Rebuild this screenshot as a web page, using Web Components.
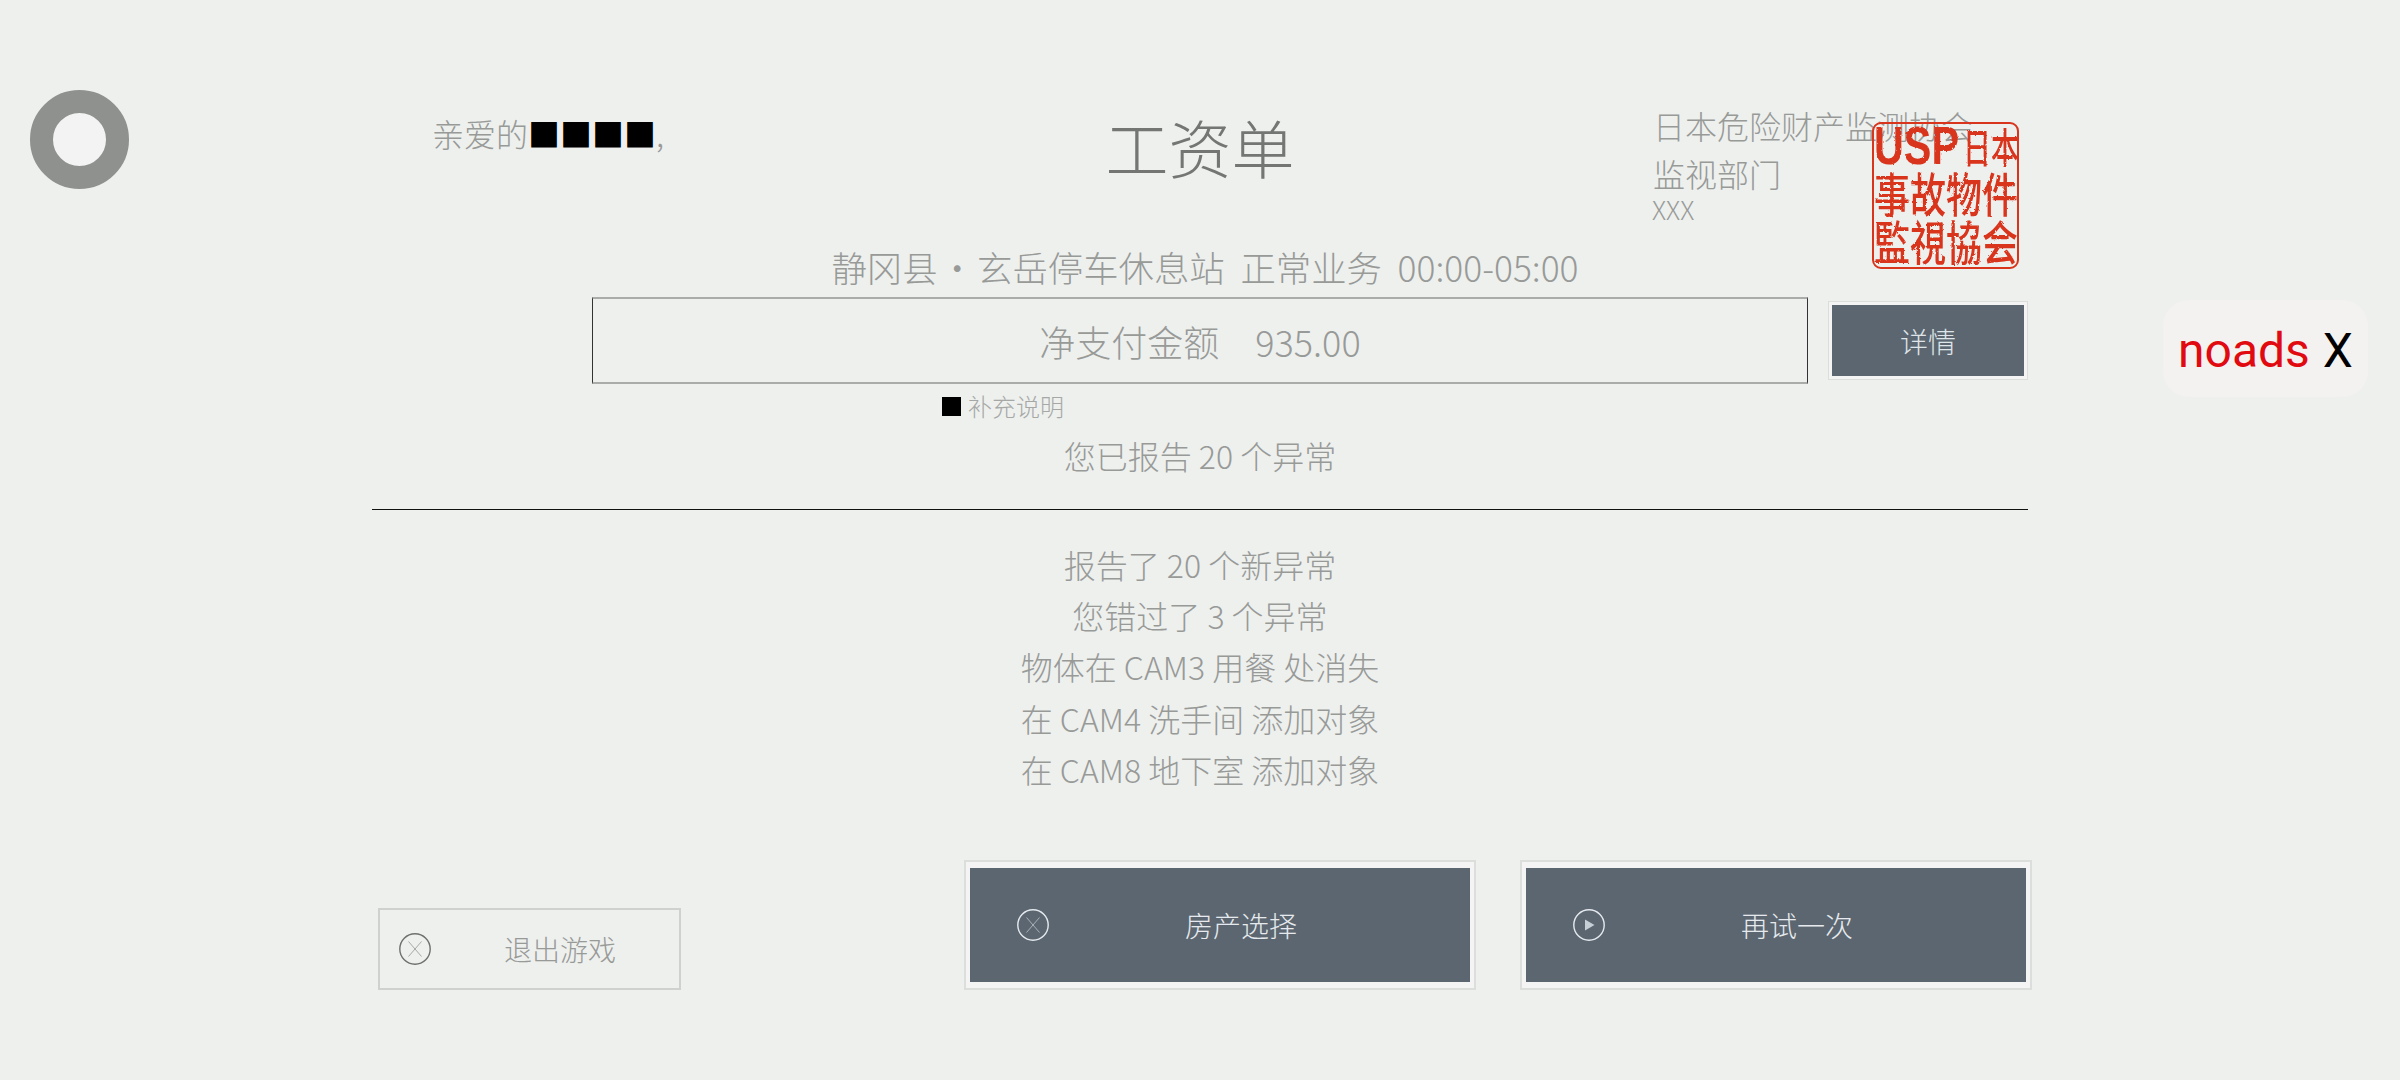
<!DOCTYPE html>
<html lang="zh">
<head>
<meta charset="utf-8">
<title>工资单</title>
<style>
  html, body { margin: 0; height: 100%; background: #eef0ee; }
  body { font-family: "Noto Sans CJK SC", "Noto Sans", sans-serif; font-weight: 300; color: #989a98; overflow: hidden; }
  b { color: #000; font-weight: 400; }
</style>
</head>
<body>
<pay-slip>
  <slip-header slot="header">
    <span slot="greeting">亲爱的<b>■■■■</b>,</span>
    <span slot="title">工资单</span>
    <span slot="org">日本危险财产监测协会</span>
    <span slot="dept">监视部门</span>
    <span slot="name">XXX</span>
  </slip-header>
  <slip-amount slot="amount"></slip-amount>
  <slip-button slot="actions" kind="exit" icon="cross">退出游戏</slip-button>
  <slip-button slot="actions" kind="main" icon="cross">房产选择</slip-button>
  <slip-button slot="actions" kind="main" icon="play">再试一次</slip-button>
</pay-slip>
<script>
'use strict'

const icons = {
  cross: '<circle cx="16" cy="16" r="15.2"/><path class="mark" d="M9.5 8.5 22.5 23.5M22.5 8.5 9.5 23.5"/>',
  play: '<circle cx="16" cy="16" r="15.2"/><path class="solid" d="M12 10.500 21.500 16 12 21.500Z"/>'
};

class RingIndicator extends HTMLElement {
  constructor() {
    super();
    this.attachShadow({ mode: 'open' }).innerHTML = `
<style>
  :host { display: block; position: absolute; left: 30px; top: 90px; width: 99px; height: 99px; box-sizing: border-box; border: 23px solid #8f918e; border-radius: 50%; background: #f2f3f2; }
</style>`;
  }
}

class NoadsBadge extends HTMLElement {
  constructor() {
    super();
    this.attachShadow({ mode: 'open' }).innerHTML = `
<style>
  :host { display: flex; align-items: center; position: absolute; left: 2163px; top: 300px; width: 205px; height: 97px; box-sizing: border-box; padding: 4px 0 0 15px; border-radius: 26px; background: #f4f2f0; font: 400 48px/1 Roboto, sans-serif; color: #e00a10; }
  span { margin-left: 13px; color: #000; }
</style>
noads<span>X</span>`;
  }
}

class SlipStamp extends HTMLElement {
  constructor() {
    super();
    this.attachShadow({ mode: 'open' }).innerHTML = `
<style>
  :host { display: block; position: absolute; left: 1872px; top: 122px; width: 147px; height: 147px; box-sizing: border-box; border: 2px solid #d9341c; border-radius: 9px; color: #d9341c; font-family: "Noto Sans CJK JP", sans-serif; font-weight: 500; }
  svg { position: absolute; width: 0; height: 0; }
  .seal { filter: url(#rough); display: grid; grid-template-rows: 43px 47px 49px; height: 100%; }
  .row { display: flex; justify-content: space-between; align-items: center; line-height: 1; font-size: 36px; }
  .row span { display: block; width: 36px; text-align: center; transform: scaleY(1.3); }
  .top { font-size: 28px; }
  .top span { width: 27px; transform: scaleY(1.45); }
  .top .latin { width: 88px; text-align: left; font: 700 53px/1 "Liberation Sans", sans-serif; transform: scaleX(.78); transform-origin: 0 50%; white-space: nowrap; }
</style>
<svg><filter id="rough"><feTurbulence type="fractalNoise" baseFrequency=".35" numOctaves="2" seed="4"/><feDisplacementMap in="SourceGraphic" scale="2.500"/></filter></svg>
<div class="seal">
  <div class="row top"><span class="latin">USP</span><span>日</span><span>本</span></div>
  <div class="row"><span>事</span><span>故</span><span>物</span><span>件</span></div>
  <div class="row"><span>監</span><span>視</span><span>協</span><span>会</span></div>
</div>`;
  }
}

class SlipHeader extends HTMLElement {
  constructor() {
    super();
    this.attachShadow({ mode: 'open' }).innerHTML = `
<style>
  :host { display: grid; grid-template-columns: 640px 376px 640px; height: 143px; text-align: left; }
  .greeting { margin: 7px 0 0 60px; font-size: 32px; line-height: 48px; white-space: nowrap; }
  .title { margin-top: 13px; font-size: 63px; line-height: 62px; text-align: center; color: #747674; }
  .org { margin-top: -1px; padding-left: 265px; font-size: 32px; line-height: 48px; white-space: nowrap; }
  .name { font-size: 26px; line-height: 24px; margin-left: -1px; }
</style>
<div class="greeting"><slot name="greeting"></slot></div>
<div class="title"><slot name="title"></slot></div>
<div class="org"><div><slot name="org"></slot></div><div><slot name="dept"></slot></div><div class="name"><slot name="name"></slot></div></div>`;
  }
}

class SlipButton extends HTMLElement {
  constructor() {
    super();
    const name = this.getAttribute('icon');
    this.attachShadow({ mode: 'open' }).innerHTML = `
<style>
  :host { display: block; box-sizing: border-box; border: 2px solid #dcdedb; font-size: 28px; line-height: 40px; }
  .face { display: flex; align-items: center; height: 100%; box-sizing: border-box; }
  svg { flex: none; width: 32px; height: 32px; fill: none; stroke: currentColor; stroke-width: 1.400; }
  .mark { stroke-width: .8; opacity: .7; }
  .solid { fill: #c6ced6; stroke: none; }
  :host([kind=main]) { width: 512px; height: 130px; padding: 6px 4px; background: #f3f4f3; }
  :host([kind=main]) .face { padding-left: 47px; gap: 136px; background: #5b6670; color: #e6eaee; }
  :host([kind=exit]) { width: 303px; height: 82px; border-color: #cfd1ce; }
  :host([kind=exit]) .face { padding-left: 19px; gap: 73px; }
  :host([kind=exit]) svg { color: #6e706e; }
</style>
<div class="face"><svg viewBox="0 0 32 32">${icons[name]}</svg><span><slot></slot></span></div>`;
  }
}

class SlipAmount extends HTMLElement {
  constructor() {
    super();
    this.attachShadow({ mode: 'open' }).innerHTML = `
<style>
  :host { display: flex; gap: 20px; align-items: center; margin-left: 220px; }
  .net { display: flex; justify-content: center; align-items: center; gap: 36px; width: 1216px; height: 87px; box-sizing: border-box; border: solid #aaacaa; border-width: 2px 1px; border-left-color: #333; border-right-color: #333; font-size: 36px; }
  .detail { width: 200px; height: 79px; padding: 3px; box-sizing: border-box; border: 1px solid #dcdedb; background: #f3f4f3; }
  .detail div { display: flex; height: 100%; align-items: center; justify-content: center; background: #5b6670; color: #dfe4e8; font-size: 28px; }
</style>
<div class="net"><span>净支付金额</span><span>935.00</span></div>
<div class="detail"><div>详情</div></div>`;
  }
}

class PaySlip extends HTMLElement {
  constructor() {
    super();
    this.attachShadow({ mode: 'open' }).innerHTML = `
<style>
  :host { display: block; position: relative; height: 1080px; overflow: hidden; }
  main { width: 1656px; margin-left: 372px; padding-top: 102px; text-align: center; }
  .place { margin-bottom: 8px; padding-left: 10px; font-size: 35.400px; line-height: 44px; white-space: pre; }
  .place span { padding: 0 2px; }
  .note { display: flex; align-items: center; gap: 7px; margin: 7px 0 0 570px; font-size: 24px; line-height: 30px; color: #a6a8a6; }
  .note i { width: 19px; height: 19px; background: #000; }
  .count { margin-top: 12px; font-size: 32px; line-height: 44px; }
  hr { margin: 32px 0 29px; border: 0; border-top: 1px solid #111; }
  .lines { font-size: 32px; line-height: 51.200px; }
  .actions { display: flex; align-items: flex-end; gap: 44px; margin: 65px -4px 0 6px; }
  ::slotted(slip-button[kind=exit]) { margin-right: 239px; }
</style>
<ring-indicator></ring-indicator>
<main>
  <slot name="header"></slot>
  <div class="place">静冈县<span>・</span>玄岳停车休息站  正常业务  00:00-05:00</div>
  <slot name="amount"></slot>
  <div class="note"><i></i>补充说明</div>
  <div class="count">您已报告 20 个异常</div>
  <hr>
  <div class="lines">
    <div>报告了 20 个新异常</div>
    <div>您错过了 3 个异常</div>
    <div>物体在 CAM3 用餐 处消失</div>
    <div>在 CAM4 洗手间 添加对象</div>
    <div>在 CAM8 地下室 添加对象</div>
  </div>
  <div class="actions"><slot name="actions"></slot></div>
</main>
<slip-stamp></slip-stamp>
<noads-badge></noads-badge>`;
  }
}

customElements.define('ring-indicator', RingIndicator);
customElements.define('noads-badge', NoadsBadge);
customElements.define('slip-stamp', SlipStamp);
customElements.define('slip-header', SlipHeader);
customElements.define('slip-button', SlipButton);
customElements.define('slip-amount', SlipAmount);
customElements.define('pay-slip', PaySlip);
</script>
</body>
</html>
